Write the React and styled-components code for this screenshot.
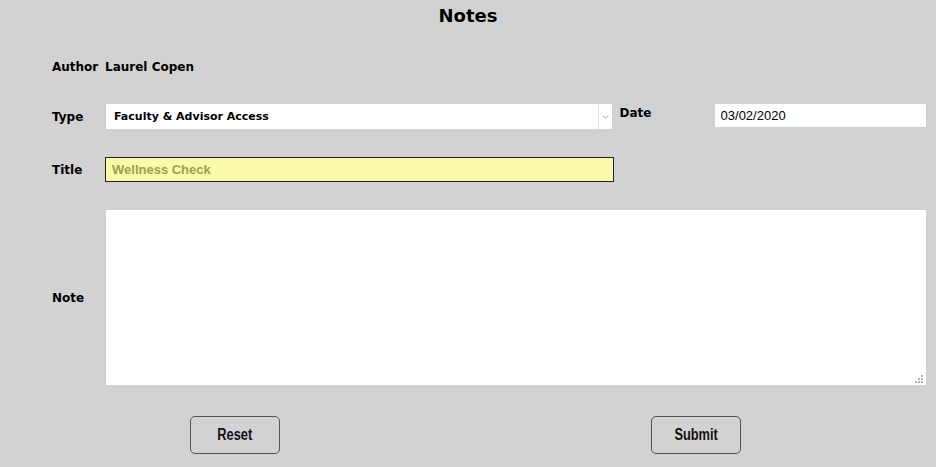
import React from 'react';
import styled, { createGlobalStyle } from 'styled-components';

const GlobalStyle = createGlobalStyle`
  html, body {
    margin: 0;
    padding: 0;
    background: #d2d2d2;
  }
  * {
    box-sizing: border-box;
  }
`;

const Page = styled.div`
  width: 936px;
  height: 467px;
  background: #d2d2d2;
  font-family: "DejaVu Sans", "Liberation Sans", sans-serif;
  color: #000;
  overflow: hidden;
`;

const Heading = styled.h1`
  margin: 0;
  height: 32px;
  line-height: 32px;
  font-size: 18px;
  font-weight: bold;
  text-align: center;
`;

const Form = styled.form`
  display: flex;
  flex-direction: column;
  padding: 0 10px 0 52px;
`;

const Row = styled.div`
  display: flex;
  align-items: ${(p) => (p.$top ? 'flex-start' : 'center')};
  margin-top: ${(p) => p.$gap}px;
  height: ${(p) => p.$h}px;
`;

const Label = styled.label`
  width: ${(p) => p.$w || 53}px;
  flex-shrink: 0;
  font-size: 12px;
  font-weight: bold;
  line-height: 16px;
  align-self: ${(p) => (p.$top ? 'flex-start' : 'center')};
`;

const Value = styled.span`
  font-size: 12px;
  font-weight: bold;
`;

const SelectWrap = styled.div`
  position: relative;
  width: 507px;
  height: 25px;
  margin-left: 1px;
  background: #fff;
`;

const Select = styled.select`
  appearance: none;
  width: 100%;
  height: 100%;
  border: none;
  outline: none;
  background: transparent;
  padding: 0 0 0 8px;
  font-family: "DejaVu Sans", sans-serif;
  font-size: 11px;
  font-weight: bold;
  color: #000;
`;

const Arrow = styled.span`
  position: absolute;
  top: 0;
  right: 0;
  width: 14px;
  height: 100%;
  border-left: 1px solid #dcdcdc;
  display: flex;
  align-items: center;
  justify-content: center;
  pointer-events: none;
`;

const DateLabel = styled(Label)`
  margin-left: 8px;
  padding-top: 1px;
`;

const DateInput = styled.input`
  width: 212px;
  height: 23px;
  margin-left: 1px;
  border: none;
  outline: none;
  background: #fff;
  padding: 0 6px;
  font-family: "Liberation Sans", Arial, sans-serif;
  font-size: 13px;
  font-weight: 500;
  color: #000;
`;

const TitleInput = styled.input`
  width: 509px;
  height: 25px;
  border: 1px solid #1c2233;
  outline: none;
  background: #fafaa8;
  padding: 0 6px;
  font-family: "Liberation Sans", Arial, sans-serif;
  font-size: 13px;
  font-weight: bold;
  color: #a0a050;
`;

const NoteWrap = styled.div`
  position: relative;
  flex: 1;
  height: 175px;
  margin-left: 1px;
`;

const NoteArea = styled.textarea`
  display: block;
  width: 100%;
  height: 100%;
  border: none;
  outline: none;
  background: #fff;
  resize: none;
  padding: 6px;
  font-family: "Liberation Sans", Arial, sans-serif;
  font-size: 13px;
`;

const Grip = styled.svg`
  position: absolute;
  right: 3px;
  bottom: 2px;
  pointer-events: none;
`;

const Buttons = styled.div`
  display: flex;
  gap: 371px;
  margin-top: 31px;
  padding-left: 138px;
`;

const Button = styled.button`
  width: 90px;
  height: 38px;
  padding: 0;
  background: transparent;
  border: 1px solid #555;
  border-radius: 5px;
  font-family: "Liberation Sans", Arial, sans-serif;
  font-size: 16px;
  font-weight: bold;
  color: #111;
  cursor: pointer;
`;

const Narrow = styled.span`
  display: inline-block;
  transform: scaleX(0.8);
`;

export default function App() {
  return (
    <Page>
      <GlobalStyle />
      <Heading>Notes</Heading>
      <Form onSubmit={(e) => e.preventDefault()}>
        <Row $gap={25} $h={20}>
          <Label>Author</Label>
          <Value>Laurel Copen</Value>
        </Row>
        <Row $gap={27} $h={25} $top>
          <Label htmlFor="type">Type</Label>
          <SelectWrap>
            <Select id="type" defaultValue="fa">
              <option value="fa">Faculty &amp; Advisor Access</option>
            </Select>
            <Arrow>
              <svg width="7" height="4" viewBox="0 0 7 4">
                <path d="M0.5 0.5 L3.5 3.2 L6.5 0.5" fill="none" stroke="#a8a8a8" strokeWidth="1" />
              </svg>
            </Arrow>
          </SelectWrap>
          <DateLabel $w={94} $top htmlFor="date">Date</DateLabel>
          <DateInput id="date" defaultValue="03/02/2020" />
        </Row>
        <Row $gap={28} $h={25}>
          <Label htmlFor="title">Title</Label>
          <TitleInput id="title" defaultValue="Wellness Check" />
        </Row>
        <Row $gap={28} $h={175}>
          <Label htmlFor="note">Note</Label>
          <NoteWrap>
            <NoteArea id="note" />
            <Grip width="8" height="8" viewBox="0 0 8 8">
              <rect x="6" y="0" width="2" height="2" fill="#b4b4b4" />
              <rect x="3" y="3" width="2" height="2" fill="#b4b4b4" />
              <rect x="6" y="3" width="2" height="2" fill="#b4b4b4" />
              <rect x="0" y="6" width="2" height="2" fill="#b4b4b4" />
              <rect x="3" y="6" width="2" height="2" fill="#b4b4b4" />
              <rect x="6" y="6" width="2" height="2" fill="#b4b4b4" />
            </Grip>
          </NoteWrap>
        </Row>
        <Buttons>
          <Button type="reset"><Narrow>Reset</Narrow></Button>
          <Button type="submit"><Narrow>Submit</Narrow></Button>
        </Buttons>
      </Form>
    </Page>
  );
}
